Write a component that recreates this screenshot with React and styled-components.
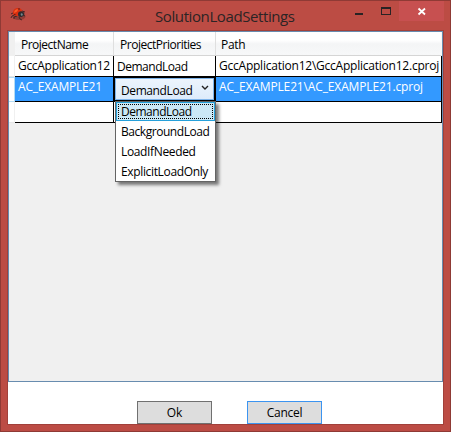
import React from "react";
import styled, { createGlobalStyle } from "styled-components";

const GlobalStyle = createGlobalStyle`
  * { box-sizing: border-box; }
  body { margin: 0; overflow: hidden; }
`;

const Window = styled.div`
  width: 451px;
  height: 432px;
  display: flex;
  flex-direction: column;
  padding: 0 6px 6px;
  border: 1px solid #8f3a35;
  background: #bc4c44;
  color: #000;
  font: 12px/16px "Open Sans", "Noto Sans", sans-serif;
  white-space: nowrap;
  cursor: default;
`;

const TitleBar = styled.header`
  height: 29px;
  flex: none;
  display: grid;
  grid-template-columns: 148px 1fr 23px 31px 45px;
  align-items: start;
`;

const AppIcon = styled.svg`
  width: 18px;
  height: 16px;
  margin: 5px 0 0 3px;
`;

const Title = styled.h1`
  margin: 4px 0 0;
  font-size: 15px;
  font-weight: 400;
  line-height: 22px;
  letter-spacing: -0.4px;
  color: #2b2425;
`;

const CaptionButton = styled.button`
  height: 20px;
  padding: 0;
  border: 0;
  background: ${(p) => (p.$close ? "#c75050" : "transparent")};
  svg { display: block; width: 100%; height: 20px; }
`;

const Client = styled.main`
  flex: 1;
  min-height: 0;
  display: flex;
  flex-direction: column;
  border: 1px solid #a1403a;
  background: #fff;
`;

const DataGrid = styled.section`
  height: 351px;
  flex: none;
  border: 1px solid #688caf;
  background: #f0f0f0;
`;

const Row = styled.div`
  display: grid;
  grid-template-columns: 6px 99px 102px 226px;
  height: ${(p) => p.$height}px;
`;

const RowHeader = styled.div`
  background: #fff;
  border-right: 1px solid #f0f0f0;
  border-bottom: 1px solid ${(p) => (p.$selected ? "#b5dcf5" : "#e5e5e5")};
  ${(p) => p.$selected && "border-top: 1px solid #b5dcf5; border-right-color: #b5dcf5;"}
`;

const Corner = styled.div`
  background: #f0f0f0;
`;

const ColumnHeader = styled.div`
  padding: 5px 0 0 ${(p) => p.$indent}px;
  border-right: 1px solid #dfdfdf;
  border-bottom: 1px solid #d5d5d5;
  background: linear-gradient(#fff 0, #fff 35%, #f4f5f6 52%, #f7f8f9 100%);
  letter-spacing: ${(p) => p.$tracking}px;
  &:last-child { border-right-color: #f7f8f9; }
`;

const Cell = styled.div`
  position: relative;
  padding: ${(p) => p.$top ?? 2}px 0 0 ${(p) => p.$indent ?? 3}px;
  border-right: 1px solid #000;
  border-bottom: 1px solid #000;
  background: ${(p) => (p.$selected ? "#3399ff" : "#fff")};
  color: ${(p) => (p.$selected ? "#fff" : "#000")};
  letter-spacing: ${(p) => p.$tracking ?? 0}px;
`;

const Combo = styled.div`
  height: 24px;
  padding: 4px 5px 0 6px;
  display: flex;
  justify-content: space-between;
  border: 1px solid #000;
  box-shadow: inset 0 0 0 1px #7eb4ea;
  background: linear-gradient(#edf5fd, #dcebfb);
  color: #000;
  letter-spacing: -0.4px;
  line-height: 17px;
  svg { width: 8px; height: 6px; margin-top: 3px; }
`;

const Menu = styled.ul`
  position: absolute;
  z-index: 2;
  left: 1px;
  top: 24px;
  width: 101px;
  height: 81px;
  margin: 0;
  padding: 0;
  list-style: none;
  border: 1px solid #646464;
  background: #fff;
  color: #000;
  box-shadow: 3px 3px 3px rgba(0, 0, 0, 0.5);
`;

const Option = styled.li`
  height: 20px;
  padding: 3px 0 0 5px;
  letter-spacing: ${(p) => p.$tracking}px;
  ${(p) => p.$active && `
    height: 19px;
    padding: 2px 0 0 4px;
    border: 1px solid #26a0da;
    background: #cbe8f6;
    outline: 1px dotted #000;
    outline-offset: -3px;
    line-height: 14px;
  `}
`;

const Footer = styled.footer`
  display: flex;
  gap: 35px;
  padding: 19px 0 0 129px;
`;

const PushButton = styled.button`
  width: 75px;
  height: 23px;
  padding: 0;
  border: 1px solid ${(p) => (p.$focused ? "#3c94f0" : "#707070")};
  background: #ddd;
  color: #000;
  font: inherit;
  letter-spacing: ${(p) => (p.$focused ? -0.25 : 0)}px;
`;

function Ladybug() {
  return (
    <AppIcon viewBox="0 0 18 16">
      <ellipse cx="9" cy="10.5" rx="6.5" ry="3.5" fill="#632d29" opacity=".5" />
      <path d="M3 7 1 8M4 9l-2 1-1 2M7 10l-3 1v2M9 11l1 2 2 1M13 9l2 1M12 5l3 1" fill="none" stroke="#3c2222" strokeWidth=".9" />
      <path d="M3 8C2.500 4 5 2 8 2c2 0 4 1 4 3 0 3-3 5-5 5C5 10 3.500 9 3 8z" fill="#d92e10" />
      <path d="M4.500 5c1-2 3-2 4-1.500L6.500 6 4 7z" fill="#fa5a25" />
      <path d="M8 8c0-2 2-3 4-2.500 2 .500 3 2 2 3.500s-2 2-3.500 2C9 11 8 10 8 8z" fill="#302b2e" />
      <path d="M10.500 8l1.500-1 1 2-1.500 1z" fill="#70868c" />
      <path d="M8 2.500h2v1H8zM4 8h1.500v1H4z" fill="#5b211a" />
    </AppIcon>
  );
}

export default function App() {
  return (
    <>
      <GlobalStyle />
      <Window>
        <TitleBar>
          <Ladybug />
          <Title>SolutionLoadSettings</Title>
          <CaptionButton aria-label="Minimize">
            <svg viewBox="0 0 23 20"><path d="M10 12h8v2h-8z" fill="#292324" /></svg>
          </CaptionButton>
          <CaptionButton aria-label="Maximize">
            <svg viewBox="0 0 31 20"><path d="M13 6h10v8H13zM14 8v5h8V8z" fill="#292324" fillRule="evenodd" /></svg>
          </CaptionButton>
          <CaptionButton $close aria-label="Close">
            <svg viewBox="0 0 45 20"><path d="m19.500 7.500 6.500 6m0-6-6.500 6" stroke="#fff" strokeWidth="1.8" /></svg>
          </CaptionButton>
        </TitleBar>
        <Client>
          <DataGrid>
            <Row $height={24}>
              <Corner />
              <ColumnHeader $indent={6} $tracking={-0.5}>ProjectName</ColumnHeader>
              <ColumnHeader $indent={6} $tracking={-0.48}>ProjectPriorities</ColumnHeader>
              <ColumnHeader $indent={5} $tracking={-0.3}>Path</ColumnHeader>
            </Row>
            <Row $height={21}>
              <RowHeader />
              <Cell $tracking={-0.3}>GccApplication12</Cell>
              <Cell $top={3} $tracking={-0.48}>DemandLoad</Cell>
              <Cell $tracking={-0.23}>GccApplication12\GccApplication12.cproj</Cell>
            </Row>
            <Row $height={25}>
              <RowHeader $selected />
              <Cell $selected $tracking={-0.2}>AC_EXAMPLE21</Cell>
              <Cell $top={0} $indent={0}>
                <Combo>
                  DemandLoad
                  <svg viewBox="0 0 8 6"><path d="m1 1 3 3 3-3" fill="none" stroke="#222" strokeWidth="1.4" /></svg>
                </Combo>
                <Menu>
                  <Option $active $tracking={-0.48}>DemandLoad</Option>
                  <Option $tracking={-0.45}>BackgroundLoad</Option>
                  <Option $tracking={-0.35}>LoadIfNeeded</Option>
                  <Option $tracking={-0.35}>ExplicitLoadOnly</Option>
                </Menu>
              </Cell>
              <Cell $selected $tracking={-0.14}>AC_EXAMPLE21\AC_EXAMPLE21.cproj</Cell>
            </Row>
            <Row $height={21}>
              <RowHeader />
              <Cell />
              <Cell />
              <Cell />
            </Row>
          </DataGrid>
          <Footer>
            <PushButton>Ok</PushButton>
            <PushButton $focused>Cancel</PushButton>
          </Footer>
        </Client>
      </Window>
    </>
  );
}
